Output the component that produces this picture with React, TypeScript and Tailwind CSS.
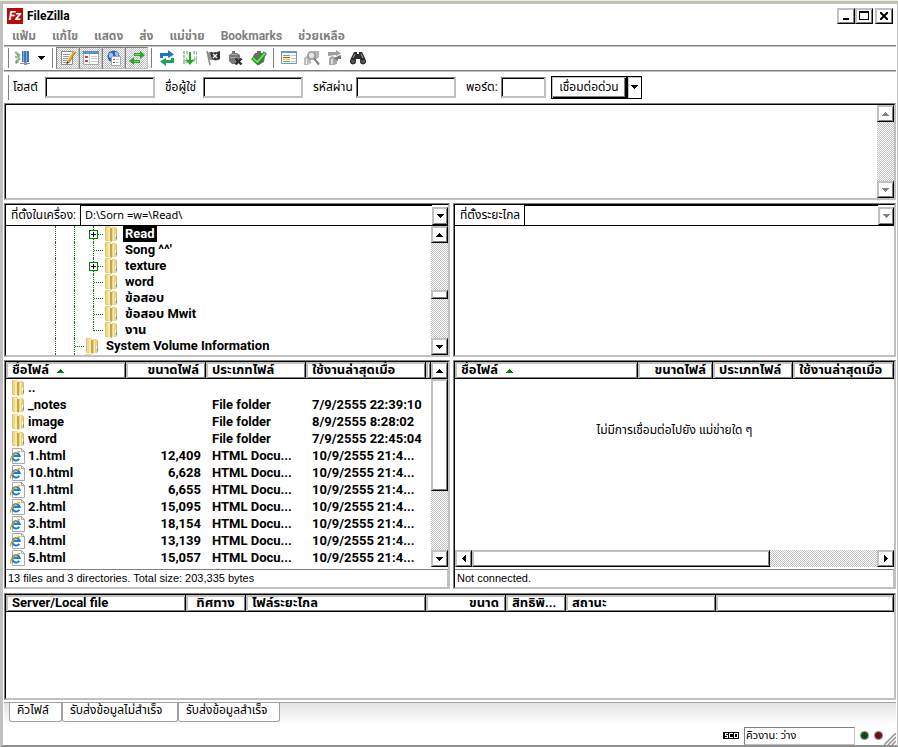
import type { ReactNode } from 'react'

const SANS = "font-['Roboto','Noto_Sans_Thai',sans-serif]"
const DITHER = 'bg-[repeating-conic-gradient(#c0c0c0_0_25%,#fff_0_50%)] bg-[length:2px_2px]'
const RAISED =
  'bg-white border border-l-[#c0c0c0] border-t-[#c0c0c0] border-r-black border-b-black shadow-[inset_1px_1px_0_#c0c0c0,inset_-1px_-1px_0_#808080]'

type Dir = 'up' | 'down' | 'left' | 'right'

const ARROWS: Record<Dir, string> = {
  up: 'M3 0h1v1h1v1h1v1h1v1H0V3h1V2h1V1h1z',
  down: 'M0 0h7v1H6v1H5v1H4v1H3V3H2V2H1V1H0z',
  left: 'M3 0h1v7H3V6H2V5H1V4H0V3h1V2h1V1h1z',
  right: 'M0 0h1v1h1v1h1v1h1v1H3v1H2v1H1v1H0z',
}

function Arrow({ dir, color = '#000' }: { dir: Dir; color?: string }) {
  const vertical = dir === 'up' || dir === 'down'
  return (
    <svg width={vertical ? 7 : 4} height={vertical ? 4 : 7} shapeRendering="crispEdges" className="shrink-0">
      <path d={ARROWS[dir]} fill={color} />
    </svg>
  )
}

function ScrollButton({ dir, disabled = false }: { dir: Dir; disabled?: boolean }) {
  return (
    <button
      aria-label={`Scroll ${dir}`}
      disabled={disabled}
      className={`flex size-[17px] shrink-0 items-center justify-center ${RAISED}`}
    >
      <Arrow dir={dir} color={disabled ? '#808080' : '#000'} />
    </button>
  )
}

function Pane({ className = '', children }: { className?: string; children: ReactNode }) {
  return (
    <div className={`flex border border-l-[#808080] border-t-[#808080] border-r-[#c0c0c0] border-b-[#c0c0c0] ${className}`}>
      <div className="flex min-h-0 min-w-0 flex-1 flex-col border border-l-black border-t-black border-r-[#c0c0c0] border-b-[#c0c0c0]">
        {children}
      </div>
    </div>
  )
}

function FolderIcon() {
  return (
    <svg width="16" height="16" viewBox="0 0 16 16" className="shrink-0">
      <path d="M2 0h5l1 1v14H3l-1-1z" fill="#eed88a" />
      <path d="M2 0h1v14H2zM3 14h5v1H3z" fill="#dcc06a" />
      <path d="M5 1h2v14H5z" fill="#f6e9b4" />
      <path d="M7 2h2v14l-2-1z" fill="#c9a63e" />
      <path d="M9 1h4v1h1v12l-1 1H9z" fill="#ecd27c" />
      <path d="M10 2h1v13h-1z" fill="#f8edc0" />
      <path d="M13 3h1v11h-1z" fill="#d9bb5c" />
      <path d="M12 8h1v3h-1z" fill="#fff" />
      <path d="M13 10h1v3h-1z" fill="#4a9be0" />
    </svg>
  )
}

function HtmlIcon() {
  return (
    <svg width="16" height="16" viewBox="0 0 16 16" className="shrink-0">
      <path d="M2.500 .5h9l3 3v12h-12z" fill="#fff" stroke="#a8a8a8" />
      <path d="M11.500 .5v3h3" fill="none" stroke="#a8a8a8" />
      <path d="M9.300 10.700a3.700 3.700 0 1 1 .4-2.700H3.200" fill="none" stroke="#1f7fcc" strokeWidth="2" />
      <path d="M1 13.500C-.8 10.500 5 4 10.200 3.700" fill="none" stroke="#e3a51c" strokeWidth="1.300" />
    </svg>
  )
}

/* toolbar glyphs, all on a 16px grid */
const glyphs = {
  server: (
    <>
      <path d="M0 2l5 4M0 13l5-5M0 7h5" stroke="#9db89d" strokeWidth="2.500" />
      <path d="M1 3l3 1-1 2zM1 10l3 2-3 2z" fill="#6ea86e" />
      <path d="M7 1h7v11H7z" fill="#3f77b8" />
      <path d="M8 1h1v11H8zM11 1h1v11h-1z" fill="#7fabdc" />
      <path d="M5 13h10v1H5zM9 12h3v3H9z" fill="#8b949c" />
    </>
  ),
  log: (
    <>
      <path d="M1.500 1.500h11v13h-11z" fill="#fff" stroke="#8c8c8c" />
      <path d="M3 4.500h7M3 6.500h6M3 8.500h5M3 10.500h4M3 12.500h4" stroke="#999" />
      <path d="M14.500 1.500L8 12" stroke="#f0a81c" strokeWidth="2.500" />
      <path d="M15.500 2L9 13" stroke="#7a4a16" strokeWidth=".6" />
      <path d="M7 11l2 1.500-2.500 2z" fill="#333" />
    </>
  ),
  localTree: (
    <>
      <path d="M.5 1.500h15v13H.5z" fill="#fff" stroke="#9aa8b8" />
      <path d="M0 1h16v3H0z" fill="#5f8fc6" />
      <path d="M6 4h1v10H6z" fill="#c4ccd6" />
      <path d="M2 6h3v2H2zM2 10h3v2H2z" fill="#d8402c" />
      <path d="M8 6h6v1H8zM8 8h6v1H8zM8 11h6v1H8z" fill="#c4ccd4" />
    </>
  ),
  remoteTree: (
    <>
      <circle cx="7.500" cy="6.500" r="6" fill="#2e66b4" />
      <path d="M3 4c2-3 5 0 4 2s-3 2-4 1zM9 2c3 0 4 2 3 4s-3-1-3-2z" fill="#9cc3ee" />
      <path d="M5.500 6.500h9v9h-9z" fill="#fff" stroke="#9aa8b8" />
      <path d="M7 9h2v1H7zM7 12h2v1H7z" fill="#d8402c" />
      <path d="M10 9h3v1h-3zM10 12h3v1h-3z" fill="#b4bcc4" />
    </>
  ),
  queue: (
    <>
      <path d="M5 3h6V1l5 4-5 4V6H5z" fill="#2aa82a" />
      <path d="M11 10H5V7l-5 4 5 4v-2h6z" fill="#2aa82a" />
      <path d="M6 4h5v1H6zM5 11h5v1H5z" fill="#6fd56f" />
    </>
  ),
  refresh: (
    <>
      <path d="M1 8V3h8V0l6 4.500L9 8V6H4v2z" fill="#1d74cc" />
      <path d="M15 8v5H7v3l-6-4.500L7 8v2h5V8z" fill="#17a558" />
    </>
  ),
  process: (
    <>
      <path d="M1 1h2v3H1zM4 1h2v3H4zM1 5h2v3H1zM1 9h2v5H1zM11 1h2v3h-2zM14 1h1v4h-1zM14 6h1v8h-1z" fill="#b4bcb8" />
      <path d="M4 7v3H2l3 4 2-3M12 5v4h-2l2 4 2-4" fill="#8ed48e" />
      <path d="M7 2h2v8h3l-4 5-4-5h3z" fill="#23a823" />
    </>
  ),
  flag: (
    <>
      <path d="M2 1l3 14" stroke="#888" strokeWidth="1.500" />
      <path d="M3 3c3-2 5 1 12-2v8c-5 3-7-1-10 1z" fill="#333" />
      <path d="M8 4l4 4M12 4L8 8" stroke="#f0f0f0" strokeWidth="1.400" />
      <path d="M3 3l2-.5 2 6.500-2 1z" fill="#999" />
    </>
  ),
  disconnect: (
    <>
      <path d="M4 1h3v2h2l3 2v7l-3 2H4l-3-3V5l3-2z" fill="#7a7a7a" />
      <path d="M3 4h6v1H3zM2 7h7v1H2z" fill="#a4a4a4" />
      <path d="M7.500 8.500l6 6M13.500 8.500l-6 6" stroke="#2f2f2f" strokeWidth="2.400" />
    </>
  ),
  reconnect: (
    <>
      <path d="M6 1h4v2h2l2 3-1 6-5 3-5-3-1-6 2-3h2z" fill="#6c6c6c" />
      <path d="M1.500 7.500l5 5 8-10" stroke="#178a17" strokeWidth="4" />
      <path d="M2 8l4.500 4L14 3" stroke="#5fe04c" strokeWidth="2.200" />
    </>
  ),
  filter: (
    <>
      <path d="M.5 1.500h15v12H.5z" fill="#fff" stroke="#7e93ab" />
      <path d="M0 1h16v2H0z" fill="#6f97c4" />
      <path d="M2 5h7v1H2z" fill="#4db64d" />
      <path d="M2 7h7v1H2z" fill="#e23a2b" />
      <path d="M2 9h7v1H2z" fill="#edc92d" />
      <path d="M2 11h7v1H2z" fill="#4db64d" />
      <path d="M10 5h5v1h-5zM10 8h5v1h-5zM10 11h5v1h-5z" fill="#a8d0e8" />
    </>
  ),
  compare: (
    <>
      <path d="M9 1h6v6l-2 2h-4z" fill="#b5b5b5" />
      <path d="M0 15V8l4-3 3 2v6l-3 2z" fill="#bdbdbd" />
      <circle cx="7.500" cy="5.500" r="3.600" fill="#e4e4e4" stroke="#8a8a8a" strokeWidth="1.400" />
      <path d="M10 8.500l5 6" stroke="#808080" strokeWidth="2" />
      <path d="M2 9h1v5H2z" fill="#eee" />
    </>
  ),
  sync: (
    <>
      <path d="M2 15V8l3-2 5 2v6l-3 1z" fill="#a8a8a8" />
      <path d="M1 6V2h8V0l5 3.500L9 6V5z" fill="#a0a0a0" />
      <path d="M14 5v4h-3v2L7 8.500 11 6z" fill="#787878" />
      <path d="M4 9h2v5H4z" fill="#ddd" />
    </>
  ),
  find: (
    <>
      <path d="M4 2h3v2h2V2h3l3 6 1 4-2 2h-3l-1-5H6l-1 5H2l-2-2 1-4z" fill="#2e2e2e" />
      <circle cx="3" cy="11.500" r="2.500" fill="#555" stroke="#222" />
      <circle cx="13" cy="11.500" r="2.500" fill="#555" stroke="#222" />
      <path d="M5 4l-2 4M11 4l2 4" stroke="#a0a0a0" />
    </>
  ),
}

type GlyphName = keyof typeof glyphs

function ToolButton({ name, label, pressed = false }: { name: GlyphName; label: string; pressed?: boolean }) {
  return (
    <button
      title={label}
      aria-label={label}
      aria-pressed={pressed}
      className={`flex h-[22px] w-[23px] items-center justify-center ${
        pressed ? `border border-l-[#808080] border-t-[#808080] border-r-[#c0c0c0] border-b-[#c0c0c0] ${DITHER}` : ''
      }`}
    >
      <svg width="16" height="16" viewBox="0 0 16 16" fill="none">
        {glyphs[name]}
      </svg>
    </button>
  )
}

function Separator() {
  return <div className="mx-[3px] h-5 w-px bg-[#808080]" />
}

function TitleBar() {
  return (
    <header className="flex h-[22px] items-center pt-px pr-[3px] pl-[3px]">
      <span className="flex size-4 items-center justify-center bg-[#b80c0c] text-[12px] leading-4 font-bold text-white italic">
        Fz
      </span>
      <h1 className="ml-1 flex-1 text-[12px] font-bold">FileZilla</h1>
      <button aria-label="Minimize" className={`flex h-4 w-[18px] items-end justify-center pb-[3px] ${RAISED}`}>
        <span className="h-0.5 w-1.5 bg-black" />
      </button>
      <button aria-label="Maximize" className={`flex h-4 w-[18px] items-center justify-center ${RAISED}`}>
        <span className="h-[9px] w-2.5 border border-t-2 border-black" />
      </button>
      <button aria-label="Close" className={`ml-0.5 flex h-4 w-[18px] items-center justify-center ${RAISED}`}>
        <svg width="8" height="8" viewBox="0 0 8 8">
          <path d="M0 0l8 8M8 0L0 8" stroke="#000" strokeWidth="2" />
        </svg>
      </button>
    </header>
  )
}

function MenuBar() {
  const items = ['แฟ้ม', 'แก้ไข', 'แสดง', 'ส่ง', 'แม่ข่าย', 'Bookmarks', 'ช่วยเหลือ']
  return (
    <nav className="flex h-[19px] items-center gap-4 pl-2 text-[12px] font-bold text-[#808080]">
      {items.map(item => (
        <button key={item}>{item}</button>
      ))}
    </nav>
  )
}

function Toolbar() {
  return (
    <div className="flex h-[26px] items-center border-t border-b border-t-[#808080] border-b-[#808080] pl-1 shadow-[inset_0_1px_0_#c0c0c0,0_1px_0_#c0c0c0]">
      <div className="mr-0.5 h-5 w-px bg-[#808080]" />
      <ToolButton name="server" label="Site Manager" />
      <button aria-label="Open site list" className="flex h-5 w-[15px] items-center justify-center">
        <Arrow dir="down" />
      </button>
      <Separator />
      <ToolButton name="log" label="Message log" pressed />
      <ToolButton name="localTree" label="Local tree" pressed />
      <ToolButton name="remoteTree" label="Remote tree" pressed />
      <ToolButton name="queue" label="Transfer queue" pressed />
      <Separator />
      <ToolButton name="refresh" label="Refresh" />
      <ToolButton name="process" label="Process queue" />
      <ToolButton name="flag" label="Cancel" />
      <ToolButton name="disconnect" label="Disconnect" />
      <ToolButton name="reconnect" label="Reconnect" />
      <Separator />
      <ToolButton name="filter" label="Filters" />
      <ToolButton name="compare" label="Compare" />
      <ToolButton name="sync" label="Synchronized browsing" />
      <ToolButton name="find" label="Find files" />
    </div>
  )
}

const FIELD =
  'h-[21px] border border-r-2 border-b-2 border-t-[#808080] border-l-[#808080] border-r-[#c0c0c0] border-b-[#c0c0c0] bg-white px-1 shadow-[inset_1px_1px_0_#000] outline-none'

function QuickConnect() {
  return (
    <form className="flex h-8 items-center pl-1 text-[12px]" onSubmit={e => e.preventDefault()}>
      <div className="mr-1 h-[25px] w-px bg-[#808080]" />
      <label htmlFor="host" className="w-8 shrink-0">โฮสต์</label>
      <input id="host" className={`w-[110px] ${FIELD}`} />
      <label htmlFor="user" className="ml-[10px] w-[38px] shrink-0 whitespace-nowrap">ชื่อผู้ใช่</label>
      <input id="user" className={`w-[100px] ${FIELD}`} />
      <label htmlFor="pass" className="ml-[10px] w-[43px] shrink-0 whitespace-nowrap">รหัสผ่าน</label>
      <input id="pass" type="password" className={`w-[100px] ${FIELD}`} />
      <label htmlFor="port" className="ml-[10px] w-[35px] shrink-0 whitespace-nowrap">พอร์ต:</label>
      <input id="port" className={`w-[45px] ${FIELD}`} />
      <button className="ml-[5px] h-[23px] w-[76px] border border-black bg-white whitespace-nowrap shadow-[inset_1px_1px_0_#c0c0c0,inset_-1px_-1px_0_#000,inset_-2px_-2px_0_#808080]">
        เชื่อมต่อด่วน
      </button>
      <button
        type="button"
        aria-label="Recent servers"
        className="flex h-[23px] w-[15px] items-center justify-center border border-black bg-white shadow-[inset_1px_1px_0_#c0c0c0]"
      >
        <Arrow dir="down" />
      </button>
    </form>
  )
}

function AddressBar({ id, label, value, disabled = false }: { id: string; label: string; value: string; disabled?: boolean }) {
  return (
    <div className="flex h-[21px] shrink-0 items-stretch border-b border-black">
      <label htmlFor={id} className="flex items-center border-r border-black pr-1 pl-[5px] text-[12px] whitespace-nowrap">
        {label}
      </label>
      <input
        id={id}
        defaultValue={value}
        disabled={disabled}
        className="min-w-0 flex-1 border-t border-black bg-white pl-1 font-['Noto_Sans',sans-serif] text-[11px] outline-none"
      />
      <button
        aria-label="Open path list"
        disabled={disabled}
        className={`mt-[2px] flex w-4 shrink-0 items-center justify-center ${RAISED}`}
      >
        <Arrow dir="down" color={disabled ? '#808080' : '#000'} />
      </button>
    </div>
  )
}

type Guide = 'line' | 'tee' | 'end'

interface TreeNode {
  name: string
  guides: Guide[]
  expandable?: boolean
  selected?: boolean
}

const TREE: TreeNode[] = [
  { name: 'Read', guides: ['line', 'line', 'tee'], expandable: true, selected: true },
  { name: "Song ^^'", guides: ['line', 'line', 'tee'] },
  { name: 'texture', guides: ['line', 'line', 'tee'], expandable: true },
  { name: 'word', guides: ['line', 'line', 'tee'] },
  { name: 'ข้อสอบ', guides: ['line', 'line', 'tee'] },
  { name: 'ข้อสอบ Mwit', guides: ['line', 'line', 'tee'] },
  { name: 'งาน', guides: ['line', 'line', 'end'] },
  { name: 'System Volume Information', guides: ['line', 'tee'] },
  { name: '', guides: ['line', 'line'] },
]

function GuideCell({ kind, expandable }: { kind: Guide; expandable: boolean }) {
  return (
    <span className="relative flex h-4 w-[19px] shrink-0 pl-[9px]">
      <span className={`w-full border-l border-dotted border-[#008000] ${kind === 'end' ? 'h-[9px]' : 'h-4'}`}>
        {kind !== 'line' && <span className="block h-[9px] border-b border-dotted border-[#008000]" />}
      </span>
      {expandable && (
        <span className="absolute top-1 left-[5px] flex size-[9px] items-center justify-center border border-[#008000] bg-white">
          <svg width="5" height="5" shapeRendering="crispEdges">
            <path d="M2 0h1v2h2v1H3v2H2V3H0V2h2z" />
          </svg>
        </span>
      )}
    </span>
  )
}

function LocalTree() {
  return (
    <div className="flex min-h-0 flex-1">
      <ul role="tree" className="min-w-0 flex-1 overflow-hidden pl-10">
        {TREE.map((node, i) => (
          <li key={i} role="treeitem" aria-selected={!!node.selected} className="flex h-4 items-center text-[13px] font-bold">
            {node.guides.map((kind, g) => (
              <GuideCell key={g} kind={kind} expandable={!!node.expandable && g === node.guides.length - 1} />
            ))}
            <FolderIcon />
            {node.name && (
              <span className={`ml-1 h-4 px-0.5 leading-4 whitespace-nowrap ${node.selected ? 'bg-black text-white' : ''}`}>
                {node.name}
              </span>
            )}
          </li>
        ))}
      </ul>
      <div className={`flex w-[17px] flex-col ${DITHER}`}>
        <ScrollButton dir="up" />
        <div className="flex-[46]" />
        <div className={`h-[9px] ${RAISED}`} />
        <div className="flex-[39]" />
        <ScrollButton dir="down" />
      </div>
    </div>
  )
}

interface Column {
  label: string
  width?: string
  align?: string
  sorted?: boolean
}

function ColumnHead({ columns }: { columns: Column[] }) {
  return (
    <>
      <colgroup>
        {columns.map((c, i) => (
          <col key={i} className={c.width} />
        ))}
      </colgroup>
      <thead>
        <tr>
          {columns.map((c, i) => (
            <th
              key={i}
              className={`h-[17px] overflow-hidden border-r border-b border-black p-0 px-[6px] text-[13px] leading-4 font-bold whitespace-nowrap shadow-[inset_2px_2px_0_#c0c0c0,inset_-1px_-1px_0_#808080] ${c.align ?? 'text-left'}`}
            >
              {c.label}
              {c.sorted && (
                <span className="ml-2 inline-block align-middle">
                  <Arrow dir="up" color="#008000" />
                </span>
              )}
            </th>
          ))}
        </tr>
      </thead>
    </>
  )
}

const LOCAL_COLUMNS: Column[] = [
  { label: 'ชื่อไฟล์', width: 'w-[120px]', sorted: true },
  { label: 'ขนาดไฟล์', width: 'w-[80px]', align: 'text-right' },
  { label: 'ประเภทไฟล์', width: 'w-[100px]' },
  { label: 'ใช้งานล่าสุดเมื่อ', width: 'w-[120px]' },
  { label: '' },
]

const REMOTE_COLUMNS: Column[] = [
  { label: 'ชื่อไฟล์', sorted: true },
  { label: 'ขนาดไฟล์', width: 'w-[75px]', align: 'text-right' },
  { label: 'ประเภทไฟล์', width: 'w-[80px]' },
  { label: 'ใช้งานล่าสุดเมื่อ', width: 'w-[101px]' },
]

const QUEUE_COLUMNS: Column[] = [
  { label: 'Server/Local file', width: 'w-[180px]' },
  { label: 'ทิศทาง', width: 'w-[60px]', align: 'text-center' },
  { label: 'ไฟล์ระยะไกล', width: 'w-[180px]' },
  { label: 'ขนาด', width: 'w-[80px]', align: 'text-right' },
  { label: 'สิทธิพิ...', width: 'w-[60px]' },
  { label: 'สถานะ', width: 'w-[150px]' },
  { label: '' },
]

const FILES = [
  { name: '..', size: '', type: '', modified: '', folder: true },
  { name: '_notes', size: '', type: 'File folder', modified: '7/9/2555 22:39:10', folder: true },
  { name: 'image', size: '', type: 'File folder', modified: '8/9/2555 8:28:02', folder: true },
  { name: 'word', size: '', type: 'File folder', modified: '7/9/2555 22:45:04', folder: true },
  { name: '1.html', size: '12,409', type: 'HTML Docu...', modified: '10/9/2555 21:4...' },
  { name: '10.html', size: '6,628', type: 'HTML Docu...', modified: '10/9/2555 21:4...' },
  { name: '11.html', size: '6,655', type: 'HTML Docu...', modified: '10/9/2555 21:4...' },
  { name: '2.html', size: '15,095', type: 'HTML Docu...', modified: '10/9/2555 21:4...' },
  { name: '3.html', size: '18,154', type: 'HTML Docu...', modified: '10/9/2555 21:4...' },
  { name: '4.html', size: '13,139', type: 'HTML Docu...', modified: '10/9/2555 21:4...' },
  { name: '5.html', size: '15,057', type: 'HTML Docu...', modified: '10/9/2555 21:4...' },
]

function LocalFiles() {
  return (
    <div className="flex min-h-0 flex-1">
      <div className="min-w-0 flex-1 overflow-hidden">
        <table className="w-full table-fixed border-separate border-spacing-0">
          <ColumnHead columns={LOCAL_COLUMNS} />
          <tbody className="text-[13px] leading-[17px] font-bold whitespace-nowrap">
            {FILES.map(f => (
              <tr key={f.name} className="h-[17px]">
                <td className="p-0 pl-1">
                  <span className="flex h-[17px] items-center gap-[2px]">
                    {f.folder ? <FolderIcon /> : <HtmlIcon />}
                    {f.name}
                  </span>
                </td>
                <td className="p-0 pr-[5px] text-right">{f.size}</td>
                <td className="p-0 pl-[6px]">{f.type}</td>
                <td className="p-0 pl-[6px]">{f.modified}</td>
                <td className="p-0" />
              </tr>
            ))}
          </tbody>
        </table>
      </div>
      <div className={`flex w-[17px] flex-col ${DITHER}`}>
        <ScrollButton dir="up" />
        <div className={`flex-[112] ${RAISED}`} />
        <div className="flex-[60]" />
        <ScrollButton dir="down" />
      </div>
    </div>
  )
}

function RemoteFiles() {
  return (
    <div className="flex min-h-0 flex-1 flex-col">
      <table className="w-full table-fixed border-separate border-spacing-0">
        <ColumnHead columns={REMOTE_COLUMNS} />
      </table>
      <p className="flex-1 pt-[42px] text-center text-[12px]">ไม่มีการเชื่อมต่อไปยัง แม่ข่ายใด ๆ</p>
      <div className={`flex h-[17px] ${DITHER}`}>
        <ScrollButton dir="left" />
        <div className={`flex-[298] ${RAISED}`} />
        <div className="flex-[108]" />
        <ScrollButton dir="right" />
      </div>
    </div>
  )
}

function PaneStatus({ text }: { text: string }) {
  return (
    <p className="mt-[2px] h-[18px] shrink-0 border-t border-r border-t-[#808080] border-r-[#c0c0c0] pl-0.5 font-['Liberation_Sans',sans-serif] text-[11px] leading-[17px]">
      {text}
    </p>
  )
}

function QueueTabs() {
  const tabs = ['คิวไฟล์', 'รับส่งข้อมูลไม่สำเร็จ', 'รับส่งข้อมูลสำเร็จ']
  const widths = ['w-[53px]', 'w-[116px]', 'w-[102px]']
  return (
    <div role="tablist" className="mt-[2px] flex h-[24px] items-start border-t border-[#a0a0a0] bg-linear-to-b from-[#e4e4e4] to-white pl-[5px]">
      {tabs.map((tab, i) => (
        <button
          key={tab}
          role="tab"
          aria-selected={i === 0}
          className={`h-[19px] rounded-b-[3px] border border-t-0 border-[#a0a0a0] bg-white pb-[3px] pl-[7px] text-left text-[12px] leading-[15px] whitespace-nowrap ${widths[i]}`}
        >
          {tab}
        </button>
      ))}
    </div>
  )
}

function StatusBar() {
  return (
    <footer className="flex h-[19px] items-center justify-end">
      <svg width="16" height="7" shapeRendering="crispEdges" className="mr-[5px]">
        <path d="M0 0h16v7H0z" />
        <path d="M2 1h3v1H3v1h2v3H2V5h2V4H2zM6 1h4v1H7v3h3v1H6zM11 1h4v5h-4zM12 2v3h2V2z" fill="#fff" fillRule="evenodd" />
      </svg>
      <p className="h-[18px] w-[111px] border border-t-[#808080] border-l-[#808080] border-r-[#c0c0c0] border-b-[#c0c0c0] bg-white pl-px text-[11px] leading-4">
        คิวงาน: ว่าง
      </p>
      <span className="ml-[5px] size-[9px] rounded-full border border-[#909090] bg-[#0d4a10]" />
      <span className="ml-[5px] size-[9px] rounded-full border border-[#909090] bg-[#6a0f12]" />
      <svg width="12" height="12" className="ml-px self-end">
        <path d="M0 12L12 0M4 12l8-8M8 12l4-4" stroke="#909090" strokeWidth="1.500" />
      </svg>
    </footer>
  )
}

export default function App() {
  return (
    <div className={`flex h-screen flex-col overflow-hidden bg-[#eef2d2] pt-px text-black ${SANS}`}>
      <div className="flex min-h-0 flex-1 flex-col border-t-[3px] border-r border-b-2 border-l-[3px] border-t-[#c0c0c0] border-r-[#c0c0c0] border-b-[#909090] border-l-[#c0c0c0] bg-white pr-px pl-px">
        <TitleBar />
        <MenuBar />
        <Toolbar />
        <QuickConnect />

        <Pane className="h-[97px] shrink-0">
          <div className="flex min-h-0 flex-1">
            <div role="log" className="flex-1" />
            <div className={`flex w-[17px] flex-col justify-between ${DITHER}`}>
              <ScrollButton dir="up" disabled />
              <ScrollButton dir="down" disabled />
            </div>
          </div>
        </Pane>

        <div className="mt-[3px] flex h-[154px] shrink-0 gap-[3px]">
          <Pane className="min-w-0 flex-[446]">
            <AddressBar id="local-path" label="ที่ตั้งในเครื่อง:" value="D:\Sorn =w=\Read\" />
            <LocalTree />
          </Pane>
          <Pane className="min-w-0 flex-[443]">
            <AddressBar id="remote-path" label="ที่ตั้งระยะไกล" value="" disabled />
          </Pane>
        </div>

        <div className="mt-[3px] flex min-h-0 flex-1 gap-[3px]">
          <Pane className="min-w-0 flex-[446]">
            <LocalFiles />
            <PaneStatus text="13 files and 3 directories. Total size: 203,335 bytes" />
          </Pane>
          <Pane className="min-w-0 flex-[443]">
            <RemoteFiles />
            <PaneStatus text="Not connected." />
          </Pane>
        </div>

        <Pane className="mt-1 h-[107px] shrink-0">
          <table className="w-full table-fixed border-separate border-spacing-0">
            <ColumnHead columns={QUEUE_COLUMNS} />
          </table>
        </Pane>

        <QueueTabs />
        <StatusBar />
      </div>
    </div>
  )
}
